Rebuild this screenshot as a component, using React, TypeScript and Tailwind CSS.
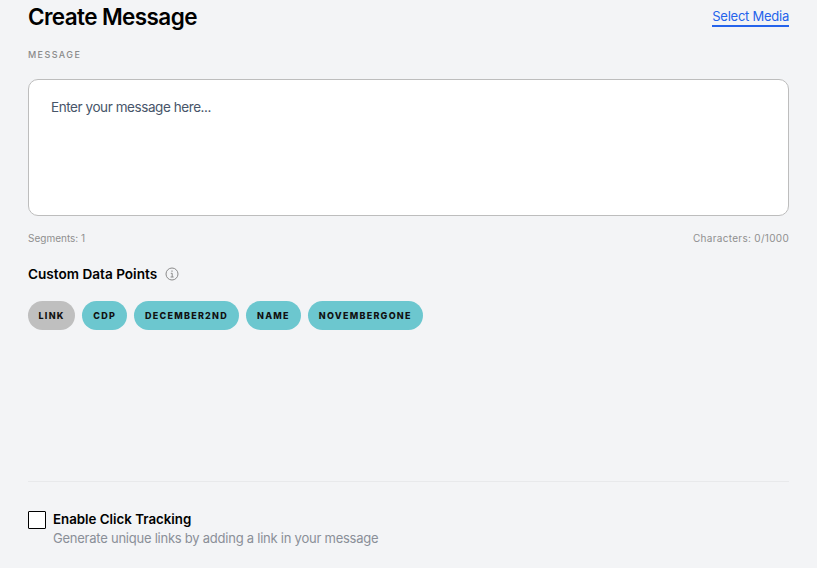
const chips = [
  { label: "LINK", grey: true },
  { label: "CDP" },
  { label: "DECEMBER2ND" },
  { label: "NAME" },
  { label: "NOVEMBERGONE" },
];

const App = () => {
  return (
    <div className="h-[568px] overflow-hidden bg-[#f3f4f6] px-7 font-['Inter',sans-serif]">
      <div className="flex h-[27px] items-start justify-between pt-[2px]">
        <h1 className="text-[22.5px] leading-[30px] font-semibold tracking-[-0.6px] text-black">
          Create Message
        </h1>
        <a className="mt-[6px] border-b-2 border-[#2563eb] pb-[1px] text-[13px] leading-[16px] tracking-[-0.25px] text-[#2563eb]">
          Select Media
        </a>
      </div>

      <div className="mt-[22px] text-[9px] leading-[12px] font-medium tracking-[1.4px] text-[#8a8a8a]">
        MESSAGE
      </div>

      <textarea
        readOnly
        placeholder="Enter your message here..."
        className="mt-[18px] block h-[137px] w-full resize-none rounded-[10px] border border-[#bdbdbd] bg-white px-[22px] py-[17px] text-[13.5px] leading-[20px] tracking-[-0.43px] outline-none placeholder:text-[#475569]"
      />

      <div className="mt-[16px] flex justify-between text-[10px] leading-[12px] text-[#8f8f8f]">
        <span>Segments: 1</span>
        <span className="tracking-[0.3px]">Characters: 0/1000</span>
      </div>

      <div className="mt-[21px] flex items-center gap-2">
        <span className="text-[13.6px] leading-[18px] font-semibold text-black">Custom Data Points</span>
        <svg width="14" height="14" viewBox="0 0 14 14" fill="none" stroke="#8a8a8a" strokeWidth="1">
          <circle cx="7" cy="7" r="6" />
          <path d="M5.8 6.3H7.2V10M5.6 10H8.6" />
          <path d="M7 3.6V4.8" strokeWidth="1.2" />
        </svg>
      </div>

      <div className="mt-[18px] flex gap-[7px]">
        {chips.map((chip) => (
          <span
            key={chip.label}
            className={
              chip.grey
                ? "flex h-[29px] items-center rounded-full bg-[#bfbfbf] px-[10.5px] text-[9px] font-extrabold tracking-[1.25px] text-[#111111]"
                : "flex h-[29px] items-center rounded-full bg-[#6cc7cf] px-[11px] text-[9px] font-extrabold tracking-[1.25px] text-[#111111]"
            }
          >
            {chip.label}
          </span>
        ))}
      </div>

      <div className="mt-[151px] border-t border-[#e8e9eb]" />

      <div className="mt-[29px] flex gap-[7px]">
        <span className="mt-[-0.5px] h-[18px] w-[18px] rounded-[1px] border border-black bg-white" />
        <div className="-mt-[1px]">
          <div className="text-[13.3px] leading-[18px] font-semibold text-black">Enable Click Tracking</div>
          <div className="mt-[1px] text-[13px] leading-[18px] tracking-[-0.24px] text-[#8a8f98]">
            Generate unique links by adding a link in your message
          </div>
        </div>
      </div>
    </div>
  );
};

export default App;
